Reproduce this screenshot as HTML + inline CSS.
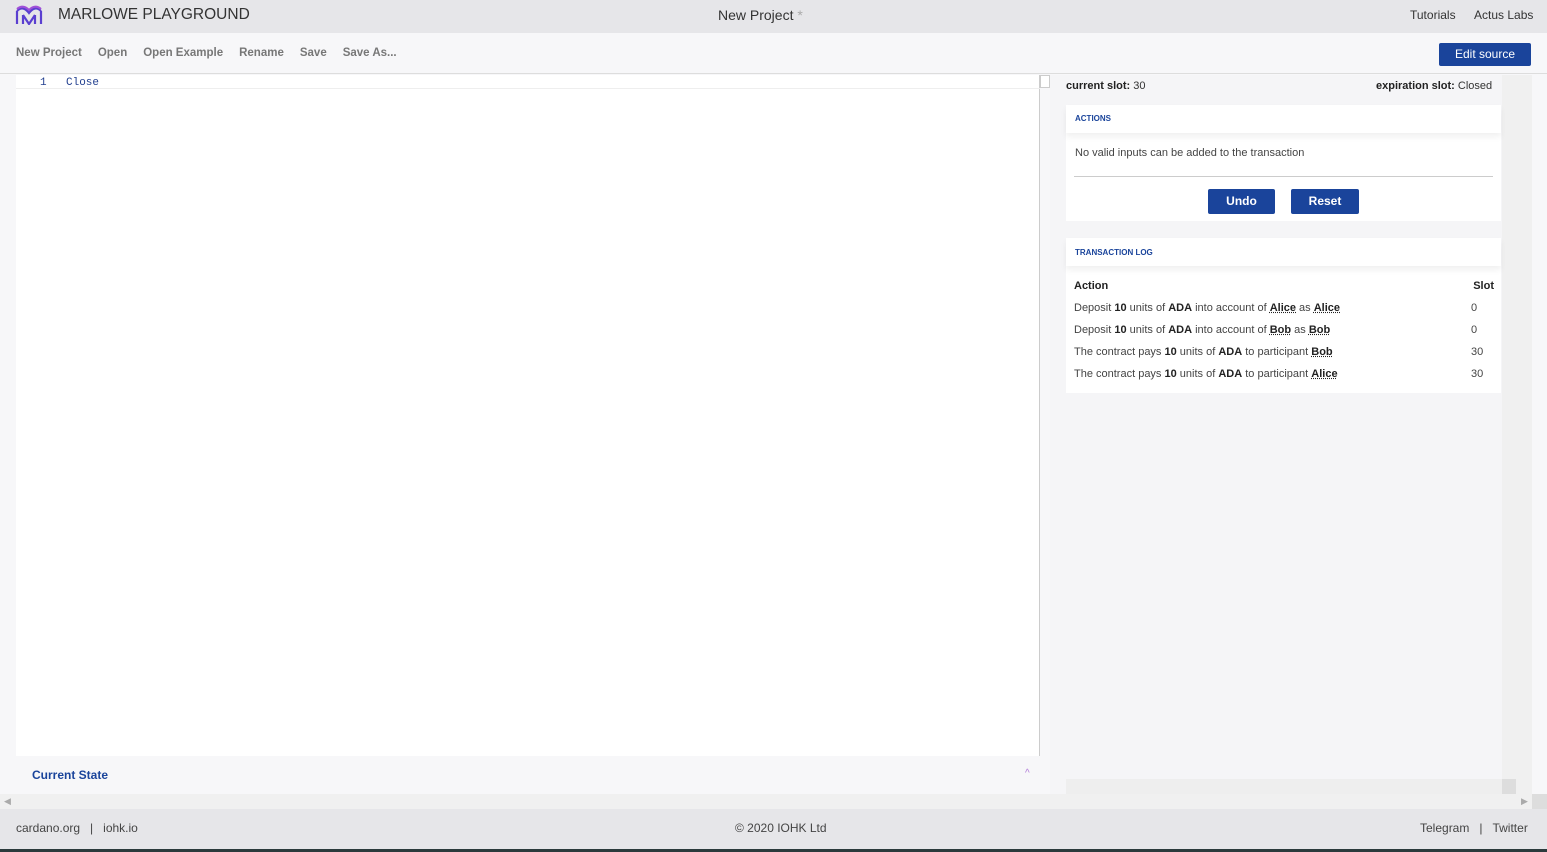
<!DOCTYPE html>
<html><head><style>
*{margin:0;padding:0;box-sizing:border-box}
body{width:1547px;height:852px;overflow:hidden;font-family:"Liberation Sans",sans-serif;background:#f7f7f9;position:relative;color:#333}
.a{position:absolute}
b{color:#222}
u{text-decoration:underline dotted;font-weight:bold;color:#222}
.btn{position:absolute;background:#1a449b;color:#fff;font-weight:bold;font-size:12px;border-radius:2px;text-align:center}
</style></head><body>
<div class="a" style="left:0;top:0;width:1547px;height:33px;background:#e6e6e9"></div>
<svg class="a" style="left:15px;top:5px" width="28" height="20" viewBox="0 0 28 20"><path d="M2 19V6 M2 6Q8 0 14 8Q20 0 26 6 M26 6V19 M8 19V10 M20 19V10 M8 10L14 19L20 10" stroke="#5a3fd0" stroke-width="2.2" fill="none"/><path d="M2 4Q8 -1 14 5Q20 -1 26 4" stroke="#a050d8" stroke-width="2" fill="none"/></svg>
<div class="a" style="left:58px;top:6px;font-size:15.5px;color:#333">MARLOWE PLAYGROUND</div>
<div class="a" style="left:718px;top:7px;font-size:14px;color:#333">New Project <span style="color:#aaa">*</span></div>
<div class="a" style="left:1410px;top:8px;font-size:12px;color:#333">Tutorials</div>
<div class="a" style="left:1474px;top:8px;font-size:12px;color:#333">Actus Labs</div>
<div class="a" style="left:0;top:33px;width:1547px;height:41px;background:#f7f7f9;border-bottom:1px solid #ddd"></div>
<div class="a" style="left:16px;top:47px;font-size:11.5px;font-weight:bold;color:#777">New Project<span style="margin-left:16px">Open</span><span style="margin-left:16px">Open Example</span><span style="margin-left:16px">Rename</span><span style="margin-left:16px">Save</span><span style="margin-left:16px">Save As...</span></div>
<div class="btn" style="left:1439px;top:43px;width:92px;height:23px;line-height:23px;font-weight:normal">Edit source</div>
<div class="a" style="left:16px;top:75px;width:1024px;height:681px;background:#fff;border-right:1px solid #ccc"></div>
<div class="a" style="left:16px;top:88px;width:1024px;height:1px;background:#eee"></div>
<div class="a" style="left:40px;top:77px;font-family:'Liberation Mono',monospace;font-size:11px;color:#223f8f">1</div>
<div class="a" style="left:66px;top:77px;font-family:'Liberation Mono',monospace;font-size:11px;color:#223f8f">Close</div>
<div class="a" style="left:1040px;top:75px;width:10px;height:13px;border:1px solid #ccc;background:#fff"></div>
<div class="a" style="left:16px;top:756px;width:1034px;height:38px;background:#f7f7f9"></div>
<div class="a" style="left:32px;top:768px;font-size:12px;font-weight:bold;color:#1a449b">Current State</div>
<div class="a" style="left:1025px;top:768px;font-size:10px;color:#b07ad8">^</div>
<div class="a" style="left:0;top:794px;width:1532px;height:15px;background:#f0f0f0"></div>
<div class="a" style="left:4px;top:796px;font-size:9px;color:#aaa">◀</div>
<div class="a" style="left:1521px;top:796px;font-size:9px;color:#aaa">▶</div>
<div class="a" style="left:1050px;top:75px;width:466px;height:719px;background:#f5f5f7"></div>
<div class="a" style="left:1516px;top:75px;width:16px;height:719px;background:#f0f0f0"></div>
<div class="a" style="left:1532px;top:794px;width:15px;height:15px;background:#ddd"></div>
<div class="a" style="left:1502px;top:75px;width:14px;height:704px;background:#f0f0f0"></div>
<div class="a" style="left:1066px;top:779px;width:436px;height:15px;background:#eee"></div>
<div class="a" style="left:1502px;top:779px;width:14px;height:15px;background:#ddd"></div>
<div class="a" style="left:1066px;top:80px;font-size:11px"><b>current slot:</b> 30</div>
<div class="a" style="left:1376px;top:80px;font-size:11px"><b>expiration slot:</b> Closed</div>
<div class="a" style="left:1066px;top:105px;width:435px;height:116px;background:#fff"></div>
<div class="a" style="left:1066px;top:105px;width:435px;height:28px;box-shadow:0 4px 6px rgba(0,0,0,.06)"></div>
<div class="a" style="left:1075px;top:114px;font-size:8px;font-weight:bold;color:#1a449b">ACTIONS</div>
<div class="a" style="left:1075px;top:147px;font-size:11px;color:#444">No valid inputs can be added to the transaction</div>
<div class="a" style="left:1074px;top:176px;width:419px;height:1px;background:#ccc"></div>
<div class="btn" style="left:1208px;top:189px;width:67px;height:25px;line-height:25px">Undo</div>
<div class="btn" style="left:1291px;top:189px;width:68px;height:25px;line-height:25px">Reset</div>
<div class="a" style="left:1066px;top:238px;width:435px;height:155px;background:#fff"></div>
<div class="a" style="left:1066px;top:238px;width:435px;height:28px;box-shadow:0 4px 6px rgba(0,0,0,.06)"></div>
<div class="a" style="left:1075px;top:248px;font-size:8px;font-weight:bold;color:#1a449b">TRANSACTION LOG</div>
<div class="a" style="left:1074px;top:275px;font-size:11px;line-height:22px;color:#444;width:420px">
<div><b>Action</b><b style="float:right">Slot</b></div>
<div>Deposit <b>10</b> units of <b>ADA</b> into account of <u>Alice</u> as <u>Alice</u><span style="position:absolute;left:397px">0</span></div>
<div>Deposit <b>10</b> units of <b>ADA</b> into account of <u>Bob</u> as <u>Bob</u><span style="position:absolute;left:397px">0</span></div>
<div>The contract pays <b>10</b> units of <b>ADA</b> to participant <u>Bob</u><span style="position:absolute;left:397px">30</span></div>
<div>The contract pays <b>10</b> units of <b>ADA</b> to participant <u>Alice</u><span style="position:absolute;left:397px">30</span></div>
</div>
<div class="a" style="left:0;top:809px;width:1547px;height:40px;background:#e6e6e9"></div>
<div class="a" style="left:0;top:849px;width:1547px;height:3px;background:#2b3a3c"></div>
<div class="a" style="left:16px;top:821px;font-size:12px;color:#444">cardano.org &nbsp;&nbsp;| &nbsp;&nbsp;iohk.io</div>
<div class="a" style="left:735px;top:821px;font-size:12px;color:#444">© 2020 IOHK Ltd</div>
<div class="a" style="left:1420px;top:821px;font-size:12px;color:#444">Telegram &nbsp;&nbsp;| &nbsp;&nbsp;Twitter</div>
</body></html>
